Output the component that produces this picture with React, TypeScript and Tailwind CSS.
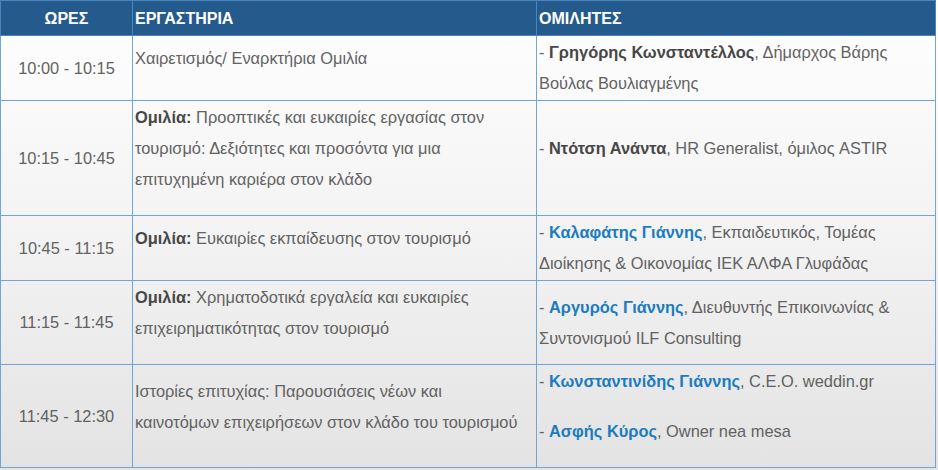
import React from 'react';

type Row = {
  time: string;
  talk: React.ReactNode;
  speakers: React.ReactNode;
};

const Blue = ({ children }: { children: React.ReactNode }) => (
  <strong className="font-bold text-[#1b7cbf]">{children}</strong>
);

const Dark = ({ children }: { children: React.ReactNode }) => (
  <strong className="font-bold text-[#474747]">{children}</strong>
);

const rows: Row[] = [
  {
    time: '10:00 - 10:15',
    talk: <p className="mb-[19px]">Χαιρετισμός/ Εναρκτήρια Ομιλία</p>,
    speakers: (
      <div>
        - <Dark>Γρηγόρης Κωνσταντέλλος</Dark>, Δήμαρχος Βάρης
        <br />
        Βούλας Βουλιαγμένης
      </div>
    ),
  },
  {
    time: '10:15 - 10:45',
    talk: (
      <p className="mb-[19px]">
        <Dark>Ομιλία:</Dark> Προοπτικές και ευκαιρίες εργασίας στον
        <br />
        τουρισμό: Δεξιότητες και προσόντα για μια
        <br />
        επιτυχημένη καριέρα στον κλάδο
      </p>
    ),
    speakers: (
      <p className="mb-[19px]">
        - <Dark>Ντότση Ανάντα</Dark>, HR Generalist, όμιλος ASTIR
      </p>
    ),
  },
  {
    time: '10:45 - 11:15',
    talk: (
      <p className="mb-[19px]">
        <Dark>Ομιλία:</Dark> Ευκαιρίες εκπαίδευσης στον τουρισμό
      </p>
    ),
    speakers: (
      <div>
        - <Blue>Καλαφάτης Γιάννης</Blue>, Εκπαιδευτικός, Τομέας
        <br />
        Διοίκησης &amp; Οικονομίας ΙΕΚ ΑΛΦΑ Γλυφάδας
      </div>
    ),
  },
  {
    time: '11:15 - 11:45',
    talk: (
      <p className="mb-[19px]">
        <Dark>Ομιλία:</Dark> Χρηματοδοτικά εργαλεία και ευκαιρίες
        <br />
        επιχειρηματικότητας στον τουρισμό
      </p>
    ),
    speakers: (
      <div>
        - <Blue>Αργυρός Γιάννης</Blue>, Διευθυντής Επικοινωνίας &amp;
        <br />
        Συντονισμού ILF Consulting
      </div>
    ),
  },
  {
    time: '11:45 - 12:30',
    talk: (
      <p className="mb-[19px]">
        Ιστορίες επιτυχίας: Παρουσιάσεις νέων και
        <br />
        καινοτόμων επιχειρήσεων στον κλάδο του τουρισμού
      </p>
    ),
    speakers: (
      <>
        <p className="mb-[19px]">
          - <Blue>Κωνσταντινίδης Γιάννης</Blue>, C.E.O. weddin.gr
        </p>
        <p className="mb-[19px]">
          - <Blue>Ασφής Κύρος</Blue>, Owner nea mesa
        </p>
      </>
    ),
  },
];

export default function App() {
  return (
    <div className="w-[938px] h-[470px] overflow-hidden bg-gradient-to-b from-white via-[#f3f3f3] to-[#e3e3e3] font-['Liberation_Sans',Arial,sans-serif]">
      <table className="w-[936px] border-collapse border border-[#7db3e2] text-[16.4px] leading-[31px] text-[#626262]">
        <thead>
          <tr className="h-[35px] bg-[#255b8c] text-white text-[16px] font-bold">
            <th className="w-[132px] border border-[#4a86bf] text-center align-middle">ΩΡΕΣ</th>
            <th className="w-[404px] border border-[#4a86bf] text-left pl-[2px] align-middle">ΕΡΓΑΣΤΗΡΙΑ</th>
            <th className="border border-[#4a86bf] text-left pl-[2px] align-middle">ΟΜΙΛΗΤΕΣ</th>
          </tr>
        </thead>
        <tbody>
          {rows.map((row) => (
            <tr key={row.time}>
              <td className="border border-[#6fa6d8] py-px text-center align-middle whitespace-nowrap">
                {row.time}
              </td>
              <td className="border border-[#6fa6d8] py-px pl-[2px] align-middle whitespace-nowrap">
                {row.talk}
              </td>
              <td className="border border-[#6fa6d8] py-px pl-[2px] align-middle whitespace-nowrap">
                {row.speakers}
              </td>
            </tr>
          ))}
        </tbody>
      </table>
    </div>
  );
}
